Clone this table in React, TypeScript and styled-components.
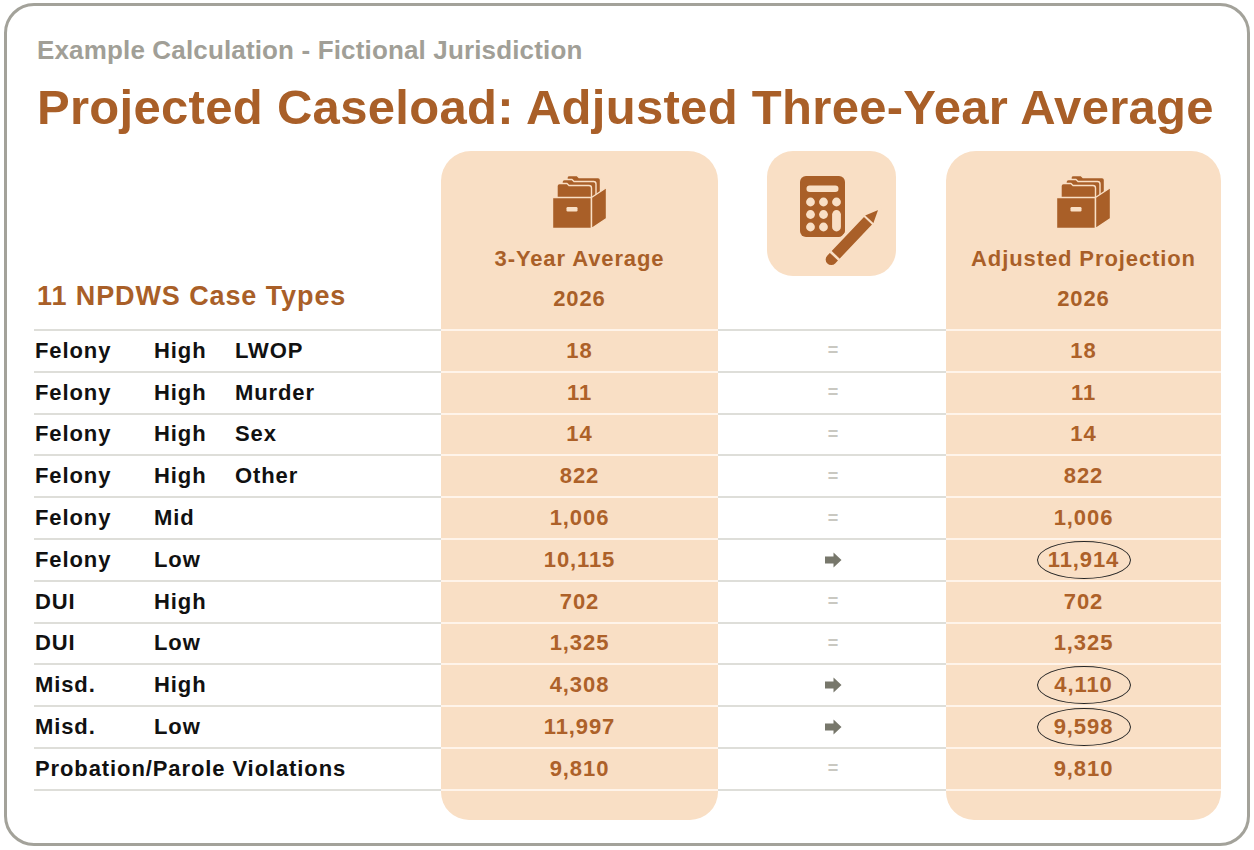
import React from "react";
import styled, { createGlobalStyle } from "styled-components";

const ORANGE = "#a95f28";
const VALUE = "#ad6129";
const PEACH = "#f9dfc5";
const GREY_LINE = "#deded9";
const PEACH_LINE = "#fff4ea";

const GlobalStyle = createGlobalStyle`
  html, body { margin: 0; padding: 0; background: #ffffff; }
  body { font-family: "Liberation Sans", Arial, sans-serif; }
  * { box-sizing: border-box; }
`;

const Frame = styled.div`
  margin: 3px 0 0 4px;
  width: 1246px;
  height: 843px;
  border: 3px solid #a3a29a;
  border-radius: 30px;
  background: #ffffff;
  padding: 30px 0 0 27px;
  display: flex;
  flex-direction: column;
`;

const Kicker = styled.div`
  padding-left: 3px;
  font-size: 26px;
  line-height: 28px;
  font-weight: 700;
  color: #a19f97;
  letter-spacing: 0.15px;
  white-space: nowrap;
`;

const Title = styled.h1`
  margin: 15px 0 0;
  padding-left: 3px;
  font-size: 49px;
  line-height: 56px;
  font-weight: 700;
  color: ${ORANGE};
  letter-spacing: 0.3px;
  white-space: nowrap;
`;

const Table = styled.div`
  margin-top: 16px;
  display: flex;
  flex-direction: column;
  width: 1187px;
`;

const Grid = styled.div`
  display: grid;
  grid-template-columns: 407px 277px 228px 275px;
`;

const HeadRow = styled(Grid)`
  height: 180px;
`;

const HeadLabel = styled.div`
  display: flex;
  align-items: flex-end;
  padding: 0 0 18px 3px;
  font-size: 27px;
  line-height: 30px;
  font-weight: 700;
  color: ${ORANGE};
  letter-spacing: 0.9px;
  white-space: nowrap;
  border-bottom: 2px solid ${GREY_LINE};
`;

const HeadColumn = styled.div`
  display: flex;
  flex-direction: column;
  align-items: center;
  padding-top: 24px;
  background: ${PEACH};
  border-radius: 30px 30px 0 0;
  border-bottom: 2px solid ${PEACH_LINE};
  color: ${ORANGE};
  font-weight: 700;
`;

const HeadName = styled.div`
  margin-top: 16px;
  font-size: 22px;
  line-height: 28px;
  letter-spacing: 0.9px;
  white-space: nowrap;
`;

const HeadYear = styled.div`
  margin-top: 12px;
  font-size: 22px;
  line-height: 28px;
  letter-spacing: 0.9px;
`;

const MidHead = styled.div`
  display: flex;
  justify-content: center;
  align-items: flex-start;
  border-bottom: 2px solid ${GREY_LINE};
`;

const CalcTile = styled.div`
  width: 129px;
  height: 125px;
  margin-right: 1px;
  border-radius: 26px;
  background: ${PEACH};
  display: flex;
`;

const Row = styled(Grid)`
  height: 41.8px;
  font-size: 22px;
  font-weight: 700;
  letter-spacing: 0.9px;
  white-space: nowrap;
`;

const LabelCell = styled.div`
  display: grid;
  grid-template-columns: 119px 81px 1fr;
  align-items: center;
  padding-left: 1px;
  color: #111111;
  border-bottom: 2px solid ${GREY_LINE};
`;

const LabelWide = styled.span`
  grid-column: 1 / -1;
`;

const ValueCell = styled.div`
  display: flex;
  align-items: center;
  justify-content: center;
  background: ${PEACH};
  color: ${VALUE};
  border-bottom: 2px solid ${PEACH_LINE};
`;

const MidCell = styled.div`
  display: flex;
  align-items: center;
  justify-content: center;
  padding-left: 2px;
  border-bottom: 2px solid ${GREY_LINE};
`;

const Equals = styled.span`
  color: #c9c8c1;
  font-size: 18px;
  font-weight: 700;
  letter-spacing: 0;
`;

const Circled = styled.span`
  display: inline-flex;
  align-items: center;
  justify-content: center;
  width: 94px;
  height: 38px;
  border: 1.6px solid #262626;
  border-radius: 50%;
`;

const FootRow = styled(Grid)`
  height: 29px;
`;

const FootPeach = styled.div`
  background: ${PEACH};
  border-radius: 0 0 28px 28px;
`;

const Blank = styled.div``;

const FileBoxIcon: React.FC = () => (
  <svg width="55" height="54" viewBox="0 0 55 54">
    <g fill={ORANGE} stroke={PEACH} strokeWidth="1.4" strokeLinejoin="round">
      <path d="M15 3 Q15 0.5 17.5 0.5 H25 L27 2.5 H46 Q48.5 2.5 48.5 5 V30 H15 Z" />
      <path d="M10 7 Q10 4.5 12.5 4.5 H20 L22 6.5 H41.5 Q44 6.5 44 9 V32 H10 Z" />
      <path d="M5 11 Q5 8.5 7.5 8.5 H15 L17 10.5 H37 Q39.5 10.5 39.5 13 V34 H5 Z" />
      <path d="M0.5 22.5 H39.5 V53.5 H0.5 Z" />
      <path d="M39.5 22.5 L54.5 12.5 V43.5 L39.5 53.5 Z" />
    </g>
    <rect x="14.5" y="32" width="11" height="4.5" rx="1.2" fill={PEACH} />
  </svg>
);

const CalcIcon: React.FC = () => (
  <svg width="129" height="125" viewBox="0 0 129 125">
    <rect x="33" y="25" width="45" height="61" rx="6" fill={ORANGE} />
    <rect x="39.5" y="34.5" width="32" height="6.5" rx="3.2" fill={PEACH} />
    {[43.5, 56.5, 69.5].map((cx) =>
      [51, 63.5, 76].map((cy) =>
        cx === 69.5 && cy > 55 ? null : (
          <circle key={`${cx}-${cy}`} cx={cx} cy={cy} r="4.4" fill={PEACH} />
        )
      )
    )}
    <rect x="65.1" y="59.1" width="8.8" height="21.3" rx="4.4" fill={PEACH} />
    <g transform="translate(86.5 85) rotate(-46.6)">
      <path
        d="M-32.5 -7 H23.5 L39.5 0 L23.5 7 H-32.5 A7 7 0 0 1 -32.5 -7 Z"
        fill={ORANGE}
        stroke={PEACH}
        strokeWidth="3"
        strokeLinejoin="round"
      />
      <rect x="-28.5" y="-7" width="2.6" height="14" fill={PEACH} />
      <rect x="21" y="-7" width="2" height="14" fill={PEACH} />
    </g>
  </svg>
);

const ArrowIcon: React.FC = () => (
  <svg width="17" height="16" viewBox="0 0 17 16">
    <path d="M0 4.5 H8.5 V0.5 L16.5 8 L8.5 15.5 V11.5 H0 Z" fill="#77776b" />
  </svg>
);

type Mark = "eq" | "arrow";

interface RowData {
  a: string;
  b?: string;
  c?: string;
  wide?: string;
  avg: string;
  proj: string;
  mark: Mark;
}

const rows: RowData[] = [
  { a: "Felony", b: "High", c: "LWOP", avg: "18", proj: "18", mark: "eq" },
  { a: "Felony", b: "High", c: "Murder", avg: "11", proj: "11", mark: "eq" },
  { a: "Felony", b: "High", c: "Sex", avg: "14", proj: "14", mark: "eq" },
  { a: "Felony", b: "High", c: "Other", avg: "822", proj: "822", mark: "eq" },
  { a: "Felony", b: "Mid", avg: "1,006", proj: "1,006", mark: "eq" },
  { a: "Felony", b: "Low", avg: "10,115", proj: "11,914", mark: "arrow" },
  { a: "DUI", b: "High", avg: "702", proj: "702", mark: "eq" },
  { a: "DUI", b: "Low", avg: "1,325", proj: "1,325", mark: "eq" },
  { a: "Misd.", b: "High", avg: "4,308", proj: "4,110", mark: "arrow" },
  { a: "Misd.", b: "Low", avg: "11,997", proj: "9,598", mark: "arrow" },
  { a: "", wide: "Probation/Parole Violations", avg: "9,810", proj: "9,810", mark: "eq" },
];

export default function App() {
  return (
    <>
      <GlobalStyle />
      <Frame>
        <Kicker>Example Calculation - Fictional Jurisdiction</Kicker>
        <Title>Projected Caseload: Adjusted Three-Year Average</Title>
        <Table>
          <HeadRow>
            <HeadLabel>11 NPDWS Case Types</HeadLabel>
            <HeadColumn>
              <FileBoxIcon />
              <HeadName>3-Year Average</HeadName>
              <HeadYear>2026</HeadYear>
            </HeadColumn>
            <MidHead>
              <CalcTile>
                <CalcIcon />
              </CalcTile>
            </MidHead>
            <HeadColumn>
              <FileBoxIcon />
              <HeadName>Adjusted Projection</HeadName>
              <HeadYear>2026</HeadYear>
            </HeadColumn>
          </HeadRow>
          {rows.map((r, i) => (
            <Row key={i}>
              <LabelCell>
                {r.wide ? (
                  <LabelWide>{r.wide}</LabelWide>
                ) : (
                  <>
                    <span>{r.a}</span>
                    <span>{r.b}</span>
                    <span>{r.c ?? ""}</span>
                  </>
                )}
              </LabelCell>
              <ValueCell>{r.avg}</ValueCell>
              <MidCell>{r.mark === "arrow" ? <ArrowIcon /> : <Equals>=</Equals>}</MidCell>
              <ValueCell>
                {r.mark === "arrow" ? <Circled>{r.proj}</Circled> : r.proj}
              </ValueCell>
            </Row>
          ))}
          <FootRow>
            <Blank />
            <FootPeach />
            <Blank />
            <FootPeach />
          </FootRow>
        </Table>
      </Frame>
    </>
  );
}
